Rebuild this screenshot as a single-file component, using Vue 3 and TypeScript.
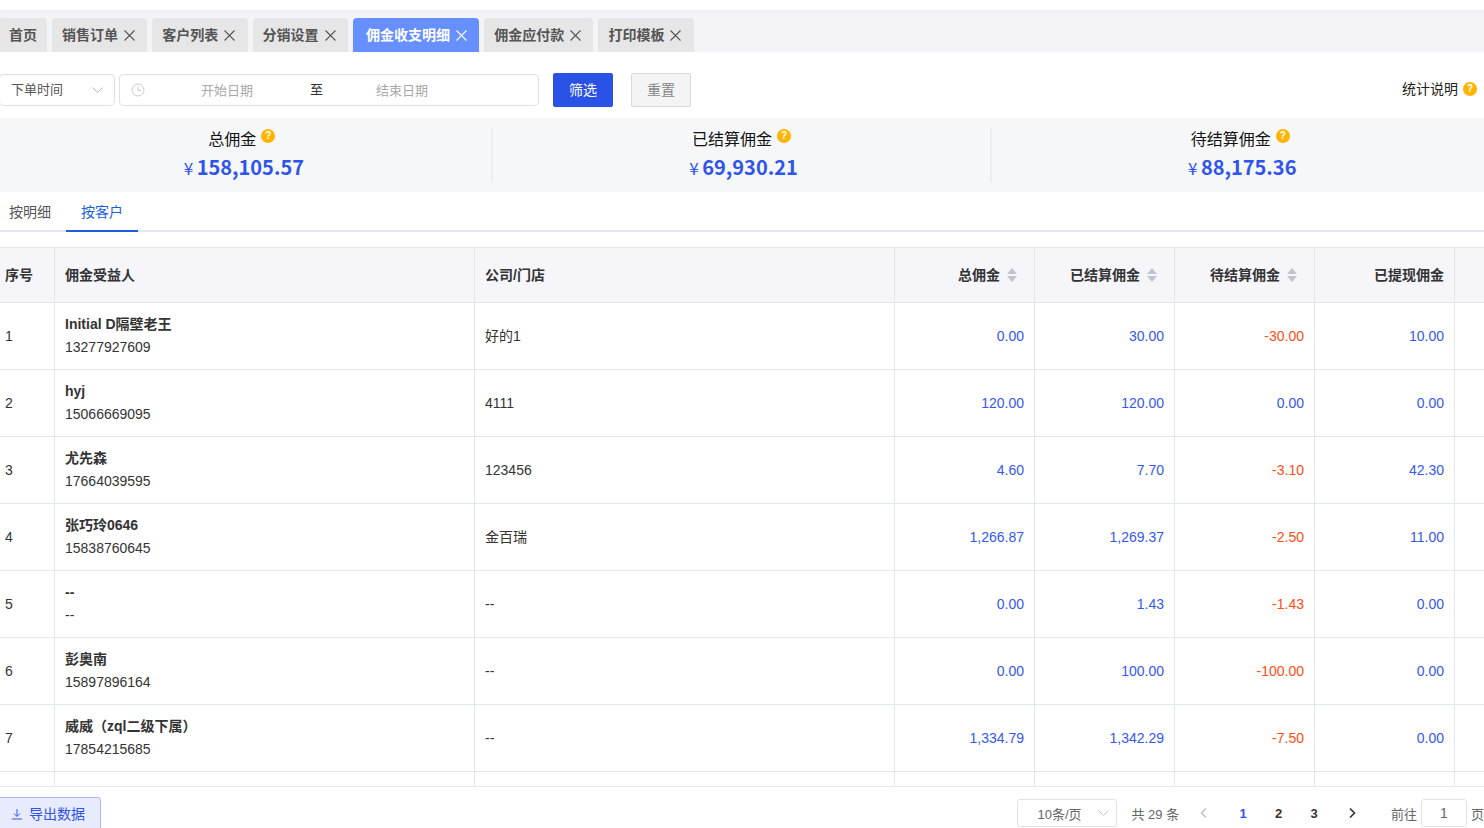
<script setup lang="ts">
import { ref } from 'vue'

interface Row {
  name: string
  phone: string
  company: string
  total: string
  settled: string
  pending: string
  withdrawn: string
}

const tabs = ref([
  { label: '首页', closable: false, active: false },
  { label: '销售订单', closable: true, active: false },
  { label: '客户列表', closable: true, active: false },
  { label: '分销设置', closable: true, active: false },
  { label: '佣金收支明细', closable: true, active: true },
  { label: '佣金应付款', closable: true, active: false },
  { label: '打印模板', closable: true, active: false },
])

const stats = [
  { title: '总佣金', value: '158,105.57' },
  { title: '已结算佣金', value: '69,930.21' },
  { title: '待结算佣金', value: '88,175.36' },
]

const rows: Row[] = [
  { name: 'Initial D隔壁老王', phone: '13277927609', company: '好的1', total: '0.00', settled: '30.00', pending: '-30.00', withdrawn: '10.00' },
  { name: 'hyj', phone: '15066669095', company: '4111', total: '120.00', settled: '120.00', pending: '0.00', withdrawn: '0.00' },
  { name: '尤先森', phone: '17664039595', company: '123456', total: '4.60', settled: '7.70', pending: '-3.10', withdrawn: '42.30' },
  { name: '张巧玲0646', phone: '15838760645', company: '金百瑞', total: '1,266.87', settled: '1,269.37', pending: '-2.50', withdrawn: '11.00' },
  { name: '--', phone: '--', company: '--', total: '0.00', settled: '1.43', pending: '-1.43', withdrawn: '0.00' },
  { name: '彭奥南', phone: '15897896164', company: '--', total: '0.00', settled: '100.00', pending: '-100.00', withdrawn: '0.00' },
  { name: '威威（zql二级下属）', phone: '17854215685', company: '--', total: '1,334.79', settled: '1,342.29', pending: '-7.50', withdrawn: '0.00' },
]

const sortHeads = ['总佣金', '已结算佣金', '待结算佣金']
</script>

<template>
  <div class="viewport">
    <div class="page">
      <div class="tab-bar">
        <div v-for="t in tabs" :key="t.label" class="tab" :class="{ active: t.active, plain: !t.closable }">
          <span>{{ t.label }}</span>
          <svg v-if="t.closable" class="close" viewBox="0 0 11 11" width="11" height="11">
            <path d="M.5.5l10 10M10.5.5l-10 10" fill="none" stroke="currentColor" stroke-width="1.1" />
          </svg>
        </div>
      </div>

      <div class="filters">
        <div class="select">
          <span>下单时间</span>
          <svg viewBox="0 0 11 6" width="11" height="6"><path d="M.5.5l5 5 5-5" fill="none" stroke="#b4b8c2" /></svg>
        </div>
        <div class="range">
          <svg viewBox="0 0 14 14" width="14" height="14" class="clock">
            <circle cx="7" cy="7" r="6" fill="none" stroke="#c9ccd4" />
            <path d="M7 3.5V7.5H10" fill="none" stroke="#c9ccd4" />
          </svg>
          <span class="ph start">开始日期</span>
          <span class="to">至</span>
          <span class="ph end">结束日期</span>
        </div>
        <button class="btn primary"><span>筛选</span></button>
        <button class="btn reset"><span>重置</span></button>
        <div class="note">
          <span class="note-text">统计说明</span>
          <span class="help">?</span>
        </div>
      </div>

      <div class="stats">
        <div v-for="s in stats" :key="s.title" class="stat">
          <div class="stat-title">
            <span>{{ s.title }}</span>
            <span class="help">?</span>
          </div>
          <div class="stat-value"><small>¥</small>{{ s.value }}</div>
        </div>
      </div>

      <div class="sub-tabs">
        <div class="sub-tab">按明细</div>
        <div class="sub-tab on">按客户</div>
      </div>

      <div class="table-wrap">
        <table>
          <colgroup>
            <col style="width: 60px" />
            <col style="width: 420px" />
            <col style="width: 420px" />
            <col style="width: 140px" />
            <col style="width: 140px" />
            <col style="width: 140px" />
            <col style="width: 140px" />
            <col style="width: 35px" />
          </colgroup>
          <thead>
            <tr>
              <th>序号</th>
              <th>佣金受益人</th>
              <th>公司/门店</th>
              <th v-for="h in sortHeads" :key="h" class="num sort">
                <span class="head-in">
                  {{ h }}
                  <svg viewBox="0 0 10 14" width="10" height="14">
                    <path d="M5 0l5 6H0zM5 14L0 8h10z" fill="#c0c4cc" />
                  </svg>
                </span>
              </th>
              <th class="num">已提现佣金</th>
              <th></th>
            </tr>
          </thead>
          <tbody>
            <tr v-for="(r, i) in rows" :key="i">
              <td>{{ i + 1 }}</td>
              <td>
                <div class="name">{{ r.name }}</div>
                <div class="phone">{{ r.phone }}</div>
              </td>
              <td>{{ r.company }}</td>
              <td class="num blue">{{ r.total }}</td>
              <td class="num blue">{{ r.settled }}</td>
              <td class="num" :class="r.pending.startsWith('-') ? 'red' : 'blue'">{{ r.pending }}</td>
              <td class="num blue">{{ r.withdrawn }}</td>
              <td></td>
            </tr>
            <tr>
              <td v-for="n in 8" :key="n"></td>
            </tr>
          </tbody>
        </table>
      </div>

      <div class="footer">
        <button class="export">
          <svg viewBox="0 0 12 12" width="12" height="12">
            <path d="M6 1v7M3 5.5L6 8.5l3-3M1 11h10" fill="none" stroke="#2f54eb" />
          </svg>
          <span>导出数据</span>
        </button>
        <div class="pager">
          <div class="size">
            <span>10条/页</span>
            <svg viewBox="0 0 11 6" width="11" height="6"><path d="M.5.5l5 5 5-5" fill="none" stroke="#c0c4cc" /></svg>
          </div>
          <span class="count">共 29 条</span>
          <svg class="prev" viewBox="0 0 7 10" width="7" height="10"><path d="M6 .5L1.5 5 6 9.5" fill="none" stroke="#c0c4cc" stroke-width="1.6" /></svg>
          <span class="pg cur">1</span>
          <span class="pg">2</span>
          <span class="pg">3</span>
          <svg class="next" viewBox="0 0 7 10" width="7" height="10"><path d="M1 .5L5.5 5 1 9.5" fill="none" stroke="#333" stroke-width="1.6" /></svg>
          <span class="goto">前往</span>
          <div class="jump">1</div>
          <span class="unit">页</span>
        </div>
      </div>
    </div>
  </div>
</template>

<style>
html,
body {
  margin: 0;
  overflow: hidden;
  background: #fff;
}
</style>

<style scoped>
.viewport {
  width: 1484px;
  height: 828px;
  overflow: hidden;
  font-family: 'Liberation Sans', 'Noto Sans CJK SC', sans-serif;
  color: #333;
}

.page {
  width: 1497px;
  height: 828px;
  margin-left: -7px;
  display: flex;
  flex-direction: column;
}

.page > * {
  flex: none;
}

.tab-bar {
  margin-top: 10px;
  height: 34px;
  padding: 7px 0 0 6px;
  display: flex;
  gap: 5px;
  background: #f4f4f8;
  border-top: 1px solid #ececf1;
}

.tab {
  display: flex;
  align-items: center;
  gap: 6px;
  padding: 0 12.3px 0 10px;
  background: #e6e6e6;
  border-radius: 4px 4px 0 0;
  font: 700 14px 'Noto Sans CJK SC', sans-serif;
  color: #555;
}

.tab span {
  padding-bottom: 2px;
}

.tab.plain {
  padding-right: 10px;
}

.tab.active {
  padding-left: 13px;
  background: #668fff;
  color: #fff;
}

.close {
  flex: none;
  margin-top: 1px;
}

.filters {
  display: flex;
  align-items: center;
  height: 34px;
  margin-top: 21px;
  padding: 0 13px 0 6px;
  font-family: 'Noto Sans CJK SC', sans-serif;
  font-size: 13px;
}

.select {
  width: 116px;
  height: 32px;
  box-sizing: border-box;
  border: 1px solid #dfe1e8;
  border-radius: 4px;
  padding: 0 11px;
  display: flex;
  align-items: center;
  justify-content: space-between;
  color: #555;
}

.select span {
  padding-bottom: 3px;
}

.range {
  width: 420px;
  height: 32px;
  box-sizing: border-box;
  margin-left: 4px;
  border: 1px solid #dfe1e8;
  border-radius: 4px;
  display: flex;
  align-items: center;
  padding-left: 11px;
  padding-bottom: 1px;
}

.ph {
  color: #a8a8a8;
}

.start {
  margin-left: 56px;
}

.to {
  margin-left: 57px;
  margin-bottom: 2px;
  color: #333;
}

.end {
  margin-left: 53px;
}

.btn {
  width: 60px;
  height: 34px;
  border-radius: 2px;
  font: 14px 'Noto Sans CJK SC', sans-serif;
  padding: 0 0 2px;
}

.primary {
  margin-left: 14px;
  background: #2b52e6;
  border: 1px solid #2b52e6;
  color: #fff;
}

.reset {
  margin-left: 18px;
  background: #f4f4f4;
  border: 1px solid #d9d9d9;
  color: #888;
}

.note {
  margin-left: auto;
  margin-bottom: 2px;
  display: flex;
  align-items: center;
  gap: 5px;
  font-size: 14px;
  color: #222;
}

.note-text {
  padding-bottom: 2px;
}

.help {
  width: 14px;
  height: 14px;
  border-radius: 50%;
  background: #ffb400;
  color: #fff;
  font: 700 10px/14px 'Liberation Sans', sans-serif;
  text-align: center;
  flex: none;
}

.stats {
  margin-top: 11px;
  padding: 10px 0;
  height: 54px;
  display: flex;
  background: #f6f7f9;
}

.stat {
  flex: 1;
  display: flex;
  flex-direction: column;
  align-items: center;
  border-right: 2px solid #eceef1;
  font-family: 'Noto Sans CJK SC', sans-serif;
}

.stat:last-child {
  border-right: 0;
}

.stat:last-child > * {
  margin-right: 2px;
}

.stat-title {
  display: flex;
  gap: 5px;
  margin-top: -1px;
  font-size: 16px;
  line-height: 22px;
  color: #111;
}

.stat-title .help {
  margin-top: 2px;
}

.stat-value {
  margin-top: 3px;
  padding-left: 4px;
  font-size: 20px;
  line-height: 30px;
  font-weight: 700;
  color: #2f54eb;
}

.stat-value small {
  display: inline-block;
  width: 13px;
  font-size: 17px;
  font-weight: 400;
}

.sub-tabs {
  height: 38px;
  display: flex;
  border-bottom: 2px solid #e4e7f2;
  padding-left: 1px;
  font-family: 'Noto Sans CJK SC', sans-serif;
  font-size: 14px;
  color: #555;
}

.sub-tab {
  width: 72px;
  height: 40px;
  box-sizing: border-box;
  line-height: 38px;
  text-align: center;
}

.sub-tab.on {
  color: #1a5fd8;
  border-bottom: 2px solid #1a5fd8;
}

.table-wrap {
  margin: 15px 0 0 2px;
  height: 539px;
  overflow: hidden;
  border-bottom: 1px solid #e6e9ef;
}

table {
  width: 1495px;
  table-layout: fixed;
  border-collapse: separate;
  border-spacing: 0;
  font-size: 14px;
  line-height: 20px;
}

th,
td {
  box-sizing: border-box;
  padding: 0 10px;
  border-right: 1px solid #e2e6ed;
  border-bottom: 1px solid #e2e6ed;
  text-align: left;
}

th {
  height: 56px;
  background: #f5f5fa;
  border-top: 1px solid #e2e6ed;
  font-weight: 700;
  color: #333;
}

td {
  height: 67px;
}

.num {
  text-align: right;
}

.sort {
  padding-right: 17px;
}

.head-in {
  display: inline-flex;
  align-items: center;
  gap: 7px;
}

.blue {
  color: #3558ee;
}

.red {
  color: #ff4d14;
}

.name {
  font-weight: 700;
  line-height: 23px;
}

.phone {
  line-height: 23px;
}

.footer {
  display: flex;
  justify-content: space-between;
  padding-top: 10px;
}

.export {
  width: 108px;
  height: 36px;
  flex: none;
  box-sizing: border-box;
  padding: 0 0 2px 17px;
  background: #e8ebfb;
  border: 1px solid #a9b8f2;
  border-radius: 3px;
  display: flex;
  align-items: center;
  gap: 6px;
  font: 14px 'Noto Sans CJK SC', sans-serif;
  color: #2f54eb;
}

.export span {
  padding-bottom: 2px;
}

.pager {
  display: flex;
  align-items: center;
  height: 28px;
  margin-top: 2px;
  padding-right: 6px;
  font-family: 'Liberation Sans', 'Noto Sans CJK SC', sans-serif;
  font-size: 13px;
  color: #666;
}

.size {
  width: 100px;
  height: 28px;
  box-sizing: border-box;
  border: 1px solid #e0e2e8;
  border-radius: 3px;
  padding: 0 7px 0 19px;
  display: flex;
  align-items: center;
  justify-content: space-between;
}

.count {
  margin-left: 14px;
  width: 69px;
}

.prev {
  margin-right: 18px;
}

.pg {
  width: 35.5px;
  text-align: center;
  font-weight: 700;
  color: #333;
}

.pg.cur {
  color: #2f54eb;
}

.next {
  margin-left: 17px;
}

.goto {
  margin-left: 35px;
}

.jump {
  width: 46px;
  height: 28px;
  box-sizing: border-box;
  margin-left: 4px;
  border: 1px solid #e0e2e8;
  border-radius: 3px;
  text-align: center;
  font-size: 14px;
  line-height: 26px;
}

.unit {
  margin-left: 4px;
}
</style>
